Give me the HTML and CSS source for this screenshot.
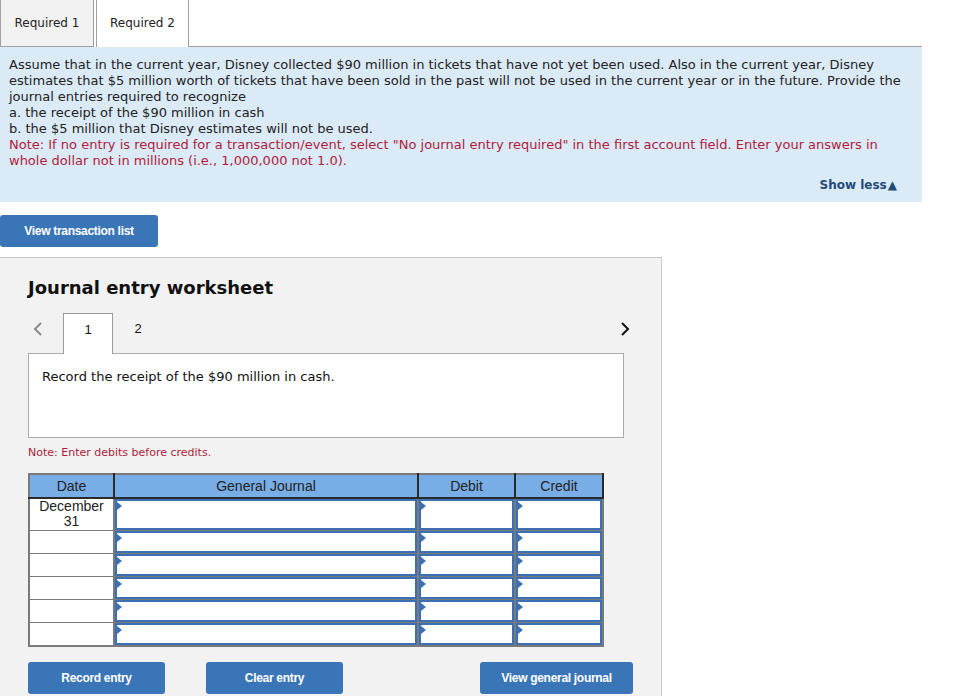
FILE: index.html
```html
<!DOCTYPE html>
<html lang="en">
<head>
    <meta charset="UTF-8">
    <title>Journal entry worksheet</title>
    <link rel="stylesheet" href="styles.css">
</head>
<body>
    <div class="tabs">
        <div class="tab">Required 1</div>
        <div class="tab active">Required 2</div>
        <div class="tab-fill"></div>
    </div>

    <div class="question">
        <p>Assume that in the current year, Disney collected $90 million in tickets that have not yet been used. Also in the current year, Disney estimates that $5 million worth of tickets that have been sold in the past will not be used in the current year or in the future. Provide the journal entries required to recognize</p>
        <p>a. the receipt of the $90 million in cash</p>
        <p>b. the $5 million that Disney estimates will not be used.</p>
        <p class="note">Note: If no entry is required for a transaction/event, select "No journal entry required" in the first account field. Enter your answers in whole dollar not in millions (i.e., 1,000,000 not 1.0).</p>
        <div class="show-less">Show less<span class="arrow">&#9650;</span></div>
    </div>

    <button class="btn btn-list">View transaction list</button>

    <div class="worksheet">
        <h2>Journal entry worksheet</h2>

        <div class="nav">
            <span class="chev prev">
                <svg width="10" height="16" viewBox="0 0 10 16"><path d="M8 2 L2 8 L8 14" fill="none" stroke="#8a8a8a" stroke-width="2"/></svg>
            </span>
            <div class="num current">1</div>
            <div class="num">2</div>
            <span class="chev next">
                <svg width="10" height="16" viewBox="0 0 10 16"><path d="M2 2 L8 8 L2 14" fill="none" stroke="#111" stroke-width="2"/></svg>
            </span>
        </div>

        <div class="entry-box">Record the receipt of the $90 million in cash.</div>

        <p class="small-note">Note: Enter debits before credits.</p>

        <table class="journal">
            <thead>
                <tr>
                    <th class="c-date">Date</th>
                    <th class="c-acct">General Journal</th>
                    <th class="c-num">Debit</th>
                    <th class="c-num2">Credit</th>
                </tr>
            </thead>
            <tbody>
                <tr class="first">
                    <td class="date">December<br>31</td>
                    <td class="in"><div class="field"></div></td>
                    <td class="in"><div class="field"></div></td>
                    <td class="in"><div class="field"></div></td>
                </tr>
                <tr>
                    <td class="date"></td>
                    <td class="in"><div class="field"></div></td>
                    <td class="in"><div class="field"></div></td>
                    <td class="in"><div class="field"></div></td>
                </tr>
                <tr>
                    <td class="date"></td>
                    <td class="in"><div class="field"></div></td>
                    <td class="in"><div class="field"></div></td>
                    <td class="in"><div class="field"></div></td>
                </tr>
                <tr>
                    <td class="date"></td>
                    <td class="in"><div class="field"></div></td>
                    <td class="in"><div class="field"></div></td>
                    <td class="in"><div class="field"></div></td>
                </tr>
                <tr>
                    <td class="date"></td>
                    <td class="in"><div class="field"></div></td>
                    <td class="in"><div class="field"></div></td>
                    <td class="in"><div class="field"></div></td>
                </tr>
                <tr>
                    <td class="date"></td>
                    <td class="in"><div class="field"></div></td>
                    <td class="in"><div class="field"></div></td>
                    <td class="in"><div class="field"></div></td>
                </tr>
            </tbody>
        </table>

        <div class="actions">
            <button class="btn btn-record">Record entry</button>
            <button class="btn btn-clear">Clear entry</button>
            <button class="btn btn-view">View general journal</button>
        </div>
    </div>
</body>
</html>
```

FILE: styles.css
```css
body {
    margin: 0;
    padding: 0;
    background: #fff;
    font-family: 'DejaVu Sans', Verdana, sans-serif;
    color: #222;
    overflow: hidden;
}

.tabs {
    display: flex;
    width: 922px;
    height: 47px;
}

.tab {
    box-sizing: border-box;
    width: 94px;
    height: 47px;
    text-align: center;
    font-size: 12px;
    line-height: 46px;
    background: #f2f2f2;
    border: 1px solid #a0a0a0;
    border-top: none;
    color: #222;
}

.tab.active {
    width: 93px;
    margin-left: 2px;
    background: #fff;
    border-bottom: none;
}

.tab-fill {
    flex: 1;
    border-bottom: 1px solid #a0a0a0;
}

.question {
    width: 922px;
    box-sizing: border-box;
    background: #dbeaf7;
    padding: 10px 10px 9px 9px;
    font-size: 13px;
    line-height: 16px;
}

.question p {
    margin: 0;
}

.question .note {
    color: #b01c3a;
}

.show-less {
    text-align: right;
    font-size: 12px;
    font-weight: bold;
    color: #1f4c78;
    margin-top: 8px;
    padding-right: 15px;
    line-height: 16px;
}

.show-less .arrow {
    font-size: 12px;
    margin-left: 1px;
}

.btn {
    background: #3a75b8;
    color: #fff;
    border: none;
    border-radius: 3px;
    font-family: 'Liberation Sans', Arial, sans-serif;
    font-weight: bold;
    font-size: 12px;
    letter-spacing: -0.3px;
    height: 32px;
    cursor: pointer;
}

.btn-list {
    display: block;
    margin-top: 13px;
    width: 158px;
}

.worksheet {
    margin-top: 10px;
    width: 662px;
    box-sizing: border-box;
    background: #f2f2f2;
    border-top: 1px solid #c8c8c8;
    border-right: 1px solid #c8c8c8;
    padding: 19px 0 4px 28px;
}

.worksheet h2 {
    margin: 0;
    font-size: 18px;
    line-height: 22px;
    color: #111;
}

.nav {
    display: flex;
    align-items: flex-start;
    margin-top: 14px;
    width: 602px;
    height: 40px;
}

.chev {
    display: flex;
    height: 31px;
    align-items: center;
}

.prev {
    margin-left: 5px;
    width: 30px;
}

.next {
    margin-left: auto;
}

.num {
    width: 50px;
    height: 40px;
    box-sizing: border-box;
    text-align: center;
    font-family: 'Liberation Sans', Arial, sans-serif;
    font-size: 13px;
    padding-top: 8px;
    color: #111;
}

.num.current {
    background: #fff;
    border: 1px solid #9a9a9a;
    border-bottom: none;
    margin-bottom: -1px;
    height: 41px;
    position: relative;
    z-index: 1;
}

.entry-box {
    width: 596px;
    height: 85px;
    box-sizing: border-box;
    background: #fff;
    border: 1px solid #aaa;
    padding: 15px 13px;
    font-size: 13px;
    line-height: 16px;
    color: #111;
}

.small-note {
    margin: 8px 0 0;
    font-size: 11px;
    line-height: 14px;
    color: #b01c3a;
}

.journal {
    margin-top: 13px;
    border-collapse: collapse;
    width: 576px;
    font-family: 'Liberation Sans', Arial, sans-serif;
    background: #fff;
    border: 2px solid #7a7a7a;
}

.journal th {
    background: #78ade5;
    color: #222;
    font-weight: normal;
    font-size: 14px;
    height: 22px;
    padding: 0;
    border-left: 2px solid #2a2a2a;
    border-bottom: 2px solid #2a2a2a;
    border-top: 1px solid #555;
}

.journal th:first-child {
    border-left: none;
}

.journal th:last-child {
    border-right: 2px solid #2a2a2a;
}

.c-date { width: 83px; }
.c-acct { width: 302px; }
.c-num { width: 95px; }

.journal td {
    padding: 0;
    border: 1px solid #7a7a7a;
    height: 22px;
}

.journal tr.first td {
    height: 31px;
}

.journal td.date {
    text-align: center;
    vertical-align: top;
    font-size: 14px;
    line-height: 15px;
    color: #222;
    padding-top: 0;
}

.journal td.in {
    border-left: 2px solid #7a7a7a;
    border-bottom: 1px solid #7a7a7a;
}

.field {
    position: relative;
    height: 100%;
    box-sizing: border-box;
    border: 2px solid #3b70b5;
    background: #fff;
}

.field::before {
    content: "";
    position: absolute;
    left: 0;
    top: 1px;
    border-top: 4px solid transparent;
    border-bottom: 4px solid transparent;
    border-left: 5px solid #3b70b5;
}

.actions {
    display: flex;
    margin-top: 15px;
}

.btn-record,
.btn-clear {
    width: 137px;
}

.btn-clear {
    margin-left: 41px;
}

.btn-view {
    width: 153px;
    margin-left: 137px;
}
```
